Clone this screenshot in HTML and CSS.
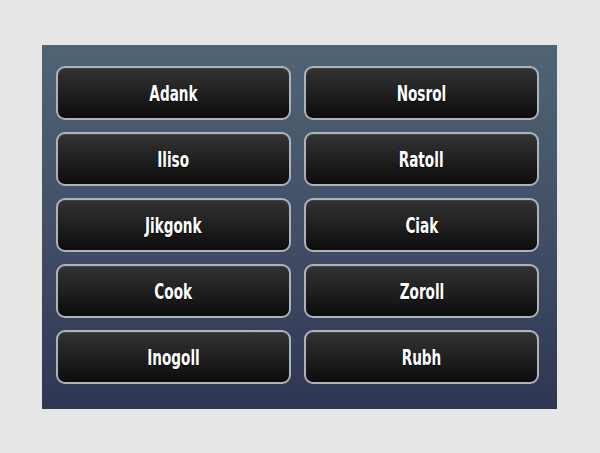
FILE: index.html
```html
<!DOCTYPE html>
<html>
<head>
<meta charset="utf-8">
<link rel="stylesheet" href="styles.css">
</head>
<body>
<div class="panel">
  <div class="grid">
    <button class="btn"><span class="label">Adank</span></button>
    <button class="btn"><span class="label">Nosrol</span></button>
    <button class="btn"><span class="label">Iliso</span></button>
    <button class="btn"><span class="label">Ratoll</span></button>
    <button class="btn"><span class="label">Jikgonk</span></button>
    <button class="btn"><span class="label">Ciak</span></button>
    <button class="btn"><span class="label">Cook</span></button>
    <button class="btn"><span class="label">Zoroll</span></button>
    <button class="btn"><span class="label">Inogoll</span></button>
    <button class="btn"><span class="label">Rubh</span></button>
  </div>
</div>
</body>
</html>
```
FILE: styles.css
```css
html, body {
  margin: 0;
  padding: 0;
}
body {
  width: 600px;
  height: 453px;
  background: #e6e6e6;
  padding: 45px 0 0 42px;
  box-sizing: border-box;
  font-family: "DejaVu Sans", sans-serif;
}
.panel {
  width: 515px;
  height: 364px;
  box-sizing: border-box;
  padding: 21px 18px 0 14px;
  background: linear-gradient(to bottom, #506474 0%, #424f67 50%, #2f3652 100%);
}
.grid {
  display: grid;
  grid-template-columns: 235px 235px;
  grid-auto-rows: 54px;
  column-gap: 13px;
  row-gap: 12px;
}
.btn {
  margin: 0;
  padding: 3px 0 0 0;
  border: 2px solid #aeb3b9;
  border-radius: 9px;
  background: linear-gradient(to bottom, #333333 0%, #222222 45%, #0c0c0c 100%);
  box-shadow: inset 0 1px 0 rgba(255,255,255,0.08);
  display: flex;
  align-items: center;
  justify-content: center;
  font-family: "DejaVu Sans", sans-serif;
}
.label {
  display: inline-block;
  color: #ffffff;
  font-size: 21px;
  font-weight: bold;
  font-stretch: condensed;
  transform: scaleX(0.72);
  text-shadow: 0 1px 1px rgba(0,0,0,0.8);
  line-height: 1;
}
```
